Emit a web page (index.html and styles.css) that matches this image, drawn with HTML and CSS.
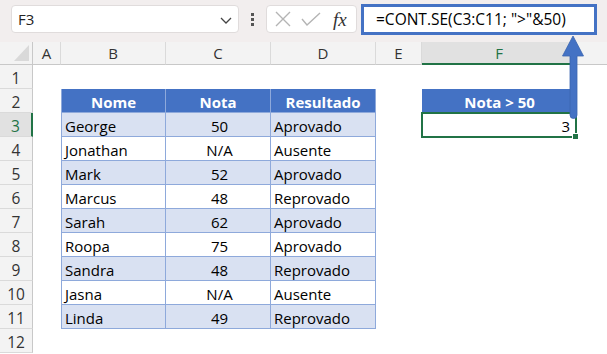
FILE: index.html
```html
<!DOCTYPE html>
<html lang="pt">
<head>
  <meta charset="UTF-8" />
  <title>CONT.SE</title>
  <link rel="stylesheet" href="styles.css">
</head>
<body>
  <header class="toolbar">
    <div class="namebox">
      <span>F3</span>
      <svg class="chev" width="12" height="7" viewBox="0 0 12 7"><path d="M1 1l5 5 5-5" fill="none" stroke="#444" stroke-width="1.3"/></svg>
    </div>
    <div class="dots"><i></i><i></i><i></i></div>
    <div class="fnbox">
      <svg width="16" height="16" viewBox="0 0 16 16"><path d="M1 1l14 14M15 1L1 15" stroke="#b4b4b4" stroke-width="1.4" fill="none"/></svg>
      <svg width="20" height="14" viewBox="0 0 20 14"><path d="M1 7l5 6L19 1" stroke="#b4b4b4" stroke-width="1.4" fill="none"/></svg>
      <span class="fx">fx</span>
    </div>
    <div class="formula">=CONT.SE(C3:C11; "&gt;"&amp;50)</div>
  </header>

  <main class="sheet">
    <div class="corner"></div>
    <div class="colh">A</div>
    <div class="colh">B</div>
    <div class="colh">C</div>
    <div class="colh">D</div>
    <div class="colh">E</div>
    <div class="colh sel">F</div>
    <div class="colh last"></div>

    <div class="rowh">1</div><div class="blank span7"></div>

    <div class="rowh">2</div><div class="blank"></div>
    <div class="cell th first">Nome</div><div class="cell th">Nota</div><div class="cell th">Resultado</div>
    <div class="blank"></div><div class="cell th solo">Nota &gt; 50</div><div class="blank"></div>

    <div class="rowh sel">3</div><div class="blank"></div>
    <div class="cell band first">George</div><div class="cell band num">50</div><div class="cell band">Aprovado</div>
    <div class="blank"></div><div class="cell active">3</div><div class="blank"></div>

    <div class="rowh">4</div><div class="blank"></div>
    <div class="cell first">Jonathan</div><div class="cell num">N/A</div><div class="cell">Ausente</div>
    <div class="blank span3"></div>

    <div class="rowh">5</div><div class="blank"></div>
    <div class="cell band first">Mark</div><div class="cell band num">52</div><div class="cell band">Aprovado</div>
    <div class="blank span3"></div>

    <div class="rowh">6</div><div class="blank"></div>
    <div class="cell first">Marcus</div><div class="cell num">48</div><div class="cell">Reprovado</div>
    <div class="blank span3"></div>

    <div class="rowh">7</div><div class="blank"></div>
    <div class="cell band first">Sarah</div><div class="cell band num">62</div><div class="cell band">Aprovado</div>
    <div class="blank span3"></div>

    <div class="rowh">8</div><div class="blank"></div>
    <div class="cell first">Roopa</div><div class="cell num">75</div><div class="cell">Aprovado</div>
    <div class="blank span3"></div>

    <div class="rowh">9</div><div class="blank"></div>
    <div class="cell band first">Sandra</div><div class="cell band num">48</div><div class="cell band">Reprovado</div>
    <div class="blank span3"></div>

    <div class="rowh">10</div><div class="blank"></div>
    <div class="cell first">Jasna</div><div class="cell num">N/A</div><div class="cell">Ausente</div>
    <div class="blank span3"></div>

    <div class="rowh">11</div><div class="blank"></div>
    <div class="cell band first">Linda</div><div class="cell band num">49</div><div class="cell band">Reprovado</div>
    <div class="blank span3"></div>

    <div class="rowh">12</div><div class="blank span7"></div>
  </main>

  <!-- seta que liga a fórmula à célula F3 -->
  <svg class="arrow" width="24" height="84" viewBox="0 0 24 84">
    <path d="M12 0L22.5 20H16V79a3.5 3.5 0 0 1-7 0V20H1.5Z" fill="#4472c4" stroke="#3b64b0" stroke-width="0.8"/>
  </svg>
</body>
</html>
```

FILE: styles.css
```css
body {
  margin: 0;
  background: #fff;
  font-family: "Open Sans", "Noto Sans", sans-serif;
  color: #000;
  width: 607px;
  height: 354px;
  overflow: hidden;
  position: relative;
}
.toolbar {
  height: 42px;
  box-sizing: border-box;
  background: #f2eeee;
  display: flex;
  align-items: flex-start;
  padding: 4px 0 0 11px;
}
.namebox {
  margin-top: 1px;
  width: 228px;
  height: 28px;
  box-sizing: border-box;
  background: #fff;
  border: 1px solid #e0dcdc;
  border-radius: 4px;
  display: flex;
  align-items: center;
  justify-content: space-between;
  padding: 0 6px 0 6px;
  font-size: 15px;
  color: #222;
}
.chev {
  margin-top: 2px;
}
.dots {
  width: 27px;
  height: 30px;
  display: flex;
  flex-direction: column;
  align-items: center;
  justify-content: center;
  gap: 2px;
}
.dots i {
  width: 3px;
  height: 3px;
  background: #555;
}
.fnbox {
  margin-top: 1px;
  width: 91px;
  height: 28px;
  box-sizing: border-box;
  background: #fff;
  border: 1px solid #e0dcdc;
  border-radius: 4px;
  display: flex;
  align-items: center;
  gap: 10px;
  padding-left: 8px;
}
.fx {
  font-family: "Liberation Serif", "DejaVu Serif", serif;
  font-style: italic;
  font-size: 19px;
  color: #333;
  margin-left: 2px;
  line-height: 1;
}
.formula {
  margin-left: 4px;
  width: 236px;
  height: 31px;
  box-sizing: border-box;
  border: 3px solid #4472c4;
  background: #fff;
  padding-left: 12px;
  font-size: 15.5px;
  line-height: 25px;
  white-space: nowrap;
}

.sheet {
  display: grid;
  grid-template-columns: 33px 28px 105px 105px 105px 46px 155px 1fr;
  grid-template-rows: 23px repeat(12, 24px);
  font-size: 15px;
}
.corner {
  background: #f3f3f3;
  border-right: 1px solid #c8c8c8;
  border-bottom: 1px solid #c8c8c8;
  position: relative;
}
.corner::after {
  content: "";
  position: absolute;
  right: 3px;
  bottom: 3px;
  border-left: 15px solid transparent;
  border-bottom: 16px solid #d9d9d9;
}
.colh {
  background: #f3f3f3;
  border-right: 1px solid #dadada;
  border-bottom: 1px solid #c8c8c8;
  display: flex;
  align-items: center;
  justify-content: center;
  color: #333;
  font-size: 15px;
}
.colh.sel {
  background: #e1e1e1;
  color: #217346;
  border-bottom: 2px solid #217346;
}
.colh.last {
  border-right: none;
}
.rowh {
  background: #f3f3f3;
  border-right: 1px solid #c8c8c8;
  border-bottom: 1px solid #dadada;
  display: flex;
  align-items: center;
  justify-content: center;
  padding-top: 2px;
  box-sizing: border-box;
  color: #333;
  font-size: 15.5px;
}
.rowh.sel {
  background: #e1e1e1;
  color: #217346;
  border-right: 2px solid #217346;
}
.span7 { grid-column: span 7; }
.span3 { grid-column: span 3; }

.cell {
  box-sizing: border-box;
  border-right: 1px solid #8ea9db;
  border-bottom: 1px solid #8ea9db;
  padding: 2px 0 0 3px;
  line-height: 22px;
  white-space: nowrap;
}
.cell.first {
  border-left: 1px solid #8ea9db;
}
.cell.num {
  text-align: center;
}
.cell.band {
  background: #d9e1f2;
}
.cell.th {
  background: #4472c4;
  color: #fff;
  font-weight: 700;
  text-align: center;
  padding-left: 0;
}
.cell.th.solo {
  border-right: none;
  border-bottom: none;
}
.cell.active {
  border: 2px solid #217346;
  margin: -1px 0 -1px -1px;
  text-align: right;
  padding: 1px 5px 0 0;
  line-height: 22px;
  position: relative;
}
.cell.active::after {
  content: "";
  position: absolute;
  right: -4px;
  bottom: -4px;
  width: 5px;
  height: 5px;
  background: #217346;
  border: 1px solid #fff;
}
.arrow {
  position: absolute;
  left: 561px;
  top: 36px;
}
```
